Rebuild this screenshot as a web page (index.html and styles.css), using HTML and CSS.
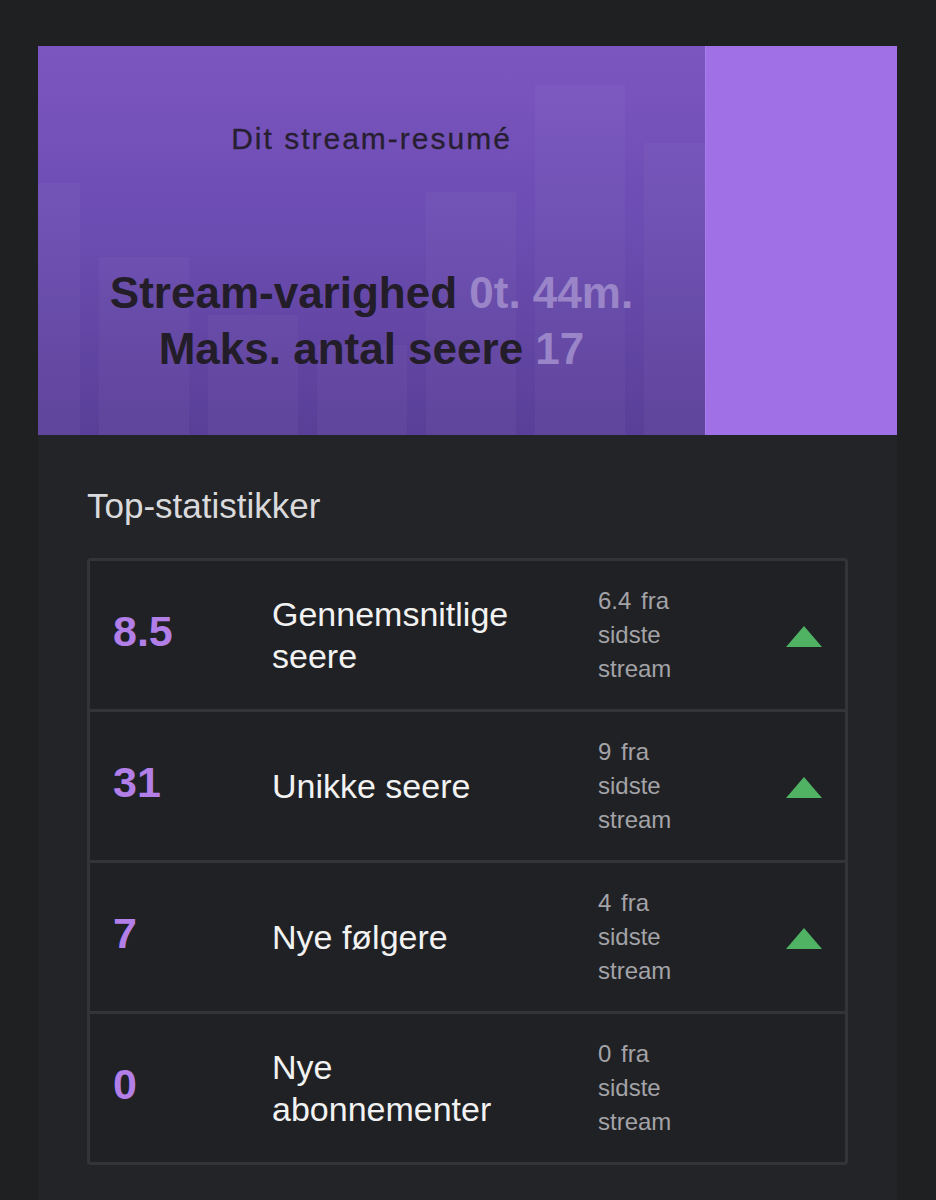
FILE: index.html
```html
<!DOCTYPE html>
<html>
<head>
  <title>Stream-resumé</title>
  <link rel="stylesheet" href="styles.css">
</head>
<body>
  <div class="card">
    <div class="hero">
      <div class="hero-main">
        <div class="hero-bars">
          <div class="bar" style="height: 252px"></div>
          <div class="bar" style="height: 178px"></div>
          <div class="bar" style="height: 120px"></div>
          <div class="bar" style="height: 90px"></div>
          <div class="bar" style="height: 243px"></div>
          <div class="bar" style="height: 350px"></div>
          <div class="bar" style="height: 292px"></div>
        </div>
        <div class="hero-content">
          <div class="hero-title">Dit stream-resumé</div>
          <div class="hero-stats">
            <div>Stream-varighed <span class="muted">0t. 44m.</span></div>
            <div>Maks. antal seere <span class="muted">17</span></div>
          </div>
        </div>
      </div>
      <div class="hero-side"></div>
    </div>

    <div class="stats">
      <h2 class="stats-title">Top-statistikker</h2>
      <div class="stats-table">
        <div class="stat-row">
          <div class="stat-value">8.5</div>
          <div class="stat-label">Gennemsnitlige seere</div>
          <div class="stat-diff">6.4 fra sidste stream</div>
          <div class="stat-trend">
            <svg width="36" height="21" viewBox="0 0 36 21"><polygon points="18,0 36,21 0,21" fill="#4fb363"/></svg>
          </div>
        </div>
        <div class="stat-row">
          <div class="stat-value">31</div>
          <div class="stat-label">Unikke seere</div>
          <div class="stat-diff">9 fra sidste stream</div>
          <div class="stat-trend">
            <svg width="36" height="21" viewBox="0 0 36 21"><polygon points="18,0 36,21 0,21" fill="#4fb363"/></svg>
          </div>
        </div>
        <div class="stat-row">
          <div class="stat-value">7</div>
          <div class="stat-label">Nye følgere</div>
          <div class="stat-diff">4 fra sidste stream</div>
          <div class="stat-trend">
            <svg width="36" height="21" viewBox="0 0 36 21"><polygon points="18,0 36,21 0,21" fill="#4fb363"/></svg>
          </div>
        </div>
        <div class="stat-row">
          <div class="stat-value">0</div>
          <div class="stat-label">Nye abonnementer</div>
          <div class="stat-diff">0 fra sidste stream</div>
          <div class="stat-trend"></div>
        </div>
      </div>
    </div>
  </div>
</body>
</html>
```

FILE: styles.css
```css
body {
  margin: 0;
  padding: 46px 39px 0 38px;
  background-color: #1f2022;
  font-family: "Liberation Sans", Arial, sans-serif;
}

.card {
  background-color: #232427;
  min-height: 1200px;
}

/* hero banner */

.hero {
  display: flex;
  height: 389px;
}

.hero-main {
  flex: 0 0 667px;
  position: relative;
  overflow: hidden;
  background: linear-gradient(180deg, #7c56c0 0%, #6c4db2 45%, #5a3f98 100%);
}

.hero-bars {
  position: absolute;
  left: -48px;
  right: 0;
  bottom: 0;
  top: 0;
  display: flex;
  align-items: flex-end;
  gap: 19px;
}

.bar {
  flex: 0 0 90px;
  background-color: rgba(255, 255, 255, 0.03);
}

.hero-content {
  position: relative;
  text-align: center;
  padding-top: 75px;
}

.hero-title {
  font-size: 30px;
  line-height: 36px;
  letter-spacing: 2px;
  color: #271f31;
  -webkit-text-stroke: 0.3px #271f31;
}

.hero-stats {
  margin-top: 108px;
  font-size: 44px;
  line-height: 56px;
  font-weight: bold;
  color: #221d28;
}

.muted {
  color: #9a85c8;
}

.hero-side {
  flex: 1;
  background-color: #a070e6;
  border-left: 1px solid #a97ced;
}

/* stats */

.stats {
  padding: 51px 49px 60px 49px;
}

.stats-title {
  margin: 0 0 32px 0;
  font-size: 35px;
  line-height: 40px;
  font-weight: normal;
  color: #dadadc;
}

.stats-table {
  border: 3px solid #333438;
  border-radius: 4px;
  background-color: #202124;
}

.stat-row {
  display: grid;
  grid-template-columns: 159px 326px 1fr 36px;
  align-items: center;
  height: 148px;
  padding: 0 23px;
}

.stat-row + .stat-row {
  border-top: 3px solid #333438;
}

.stat-value {
  font-size: 43px;
  font-weight: bold;
  color: #b27fe8;
  margin-top: -8px;
}

.stat-label {
  max-width: 260px;
  font-size: 34px;
  line-height: 42px;
  color: #f2f2f2;
}

.stat-diff {
  max-width: 100px;
  font-size: 24px;
  line-height: 34px;
  word-spacing: 3px;
  color: #a3a3a8;
}

.stat-trend svg {
  display: block;
  margin-top: 2px;
}
```
